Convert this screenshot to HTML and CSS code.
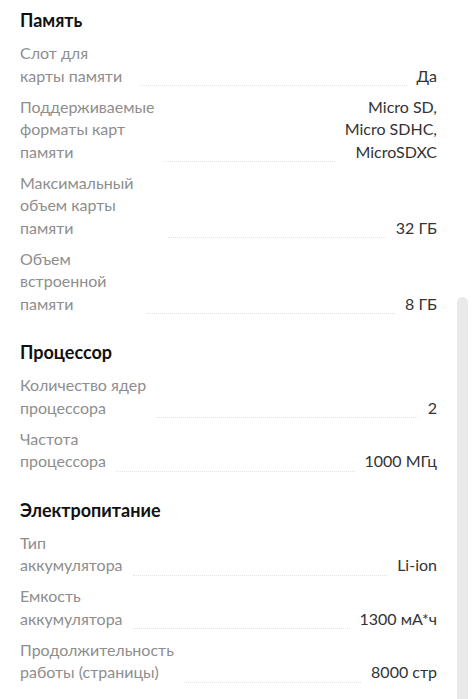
FILE: index.html
```html
<!DOCTYPE html>
<html lang="ru">
  <head>
    <meta charset="UTF-8" />
    <meta name="viewport" content="width=device-width, initial-scale=1.0" />
    <title>Характеристики</title>
    <link rel="stylesheet" href="styles.css">
  </head>

  <body>
    <div class="specs">
      <!-- Память -->
      <section class="spec-group">
        <h2>Память</h2>
        <div class="spec-row">
          <div class="spec-name w-110">Слот для<br>карты памяти</div>
          <div class="spec-dots"></div>
          <div class="spec-value">Да</div>
        </div>
        <div class="spec-row">
          <div class="spec-name">Поддерживаемые<br>форматы карт<br>памяти</div>
          <div class="spec-dots"></div>
          <div class="spec-value">Micro SD,<br>Micro SDHC,<br>MicroSDXC</div>
        </div>
        <div class="spec-row">
          <div class="spec-name w-138">Максимальный<br>объем карты<br>памяти</div>
          <div class="spec-dots"></div>
          <div class="spec-value">32 ГБ</div>
        </div>
        <div class="spec-row">
          <div class="spec-name w-117">Объем<br>встроенной<br>памяти</div>
          <div class="spec-dots"></div>
          <div class="spec-value">8 ГБ</div>
        </div>
      </section>

      <!-- Процессор -->
      <section class="spec-group">
        <h2>Процессор</h2>
        <div class="spec-row">
          <div class="spec-name">Количество ядер<br>процессора</div>
          <div class="spec-dots"></div>
          <div class="spec-value">2</div>
        </div>
        <div class="spec-row">
          <div class="spec-name">Частота<br>процессора</div>
          <div class="spec-dots"></div>
          <div class="spec-value">1000 МГц</div>
        </div>
      </section>

      <!-- Электропитание -->
      <section class="spec-group">
        <h2>Электропитание</h2>
        <div class="spec-row">
          <div class="spec-name">Тип<br>аккумулятора</div>
          <div class="spec-dots"></div>
          <div class="spec-value">Li-ion</div>
        </div>
        <div class="spec-row">
          <div class="spec-name">Емкость<br>аккумулятора</div>
          <div class="spec-dots"></div>
          <div class="spec-value">1300 мА*ч</div>
        </div>
        <div class="spec-row">
          <div class="spec-name">Продолжительность<br>работы (страницы)</div>
          <div class="spec-dots"></div>
          <div class="spec-value">8000 стр</div>
        </div>
      </section>
    </div>

    <div class="scroll-thumb"></div>
  </body>
</html>
```

FILE: styles.css
```css
/* General Styles */

body {
  font-family: Lato, "Open Sans", Arial, sans-serif;
  margin: 0;
  padding: 0;
  background-color: #ffffff;
  color: #333333;
  overflow: hidden;
}

.specs {
  padding: 8px 35px 0 20px;
}
/* Groups */

.spec-group + .spec-group {
  margin-top: 25px;
}

.spec-group h2 {
  margin: 0 0 10px;
  font-size: 18px;
  line-height: 24px;
  font-weight: bold;
  color: #111111;
}
/* Rows */

.spec-row {
  display: flex;
  align-items: flex-end;
  font-size: 16px;
  line-height: 22.5px;
}

.spec-row + .spec-row {
  margin-top: 8.5px;
}

.spec-name {
  flex: none;
  color: #8e8e8e;
}

.w-110 {
  width: 110px;
}

.w-117 {
  width: 117px;
}

.w-138 {
  width: 138px;
}

.spec-dots {
  flex: 1;
  margin: 0 10px 1px;
  border-bottom: 1px dotted #e2e2e2;
}

.spec-value {
  flex: none;
  text-align: right;
  color: #333333;
}
/* Scrollbar */

.scroll-thumb {
  position: fixed;
  right: 4px;
  top: 297px;
  width: 11px;
  height: 420px;
  background: #e9e9e9;
  border-radius: 6px;
}
```
